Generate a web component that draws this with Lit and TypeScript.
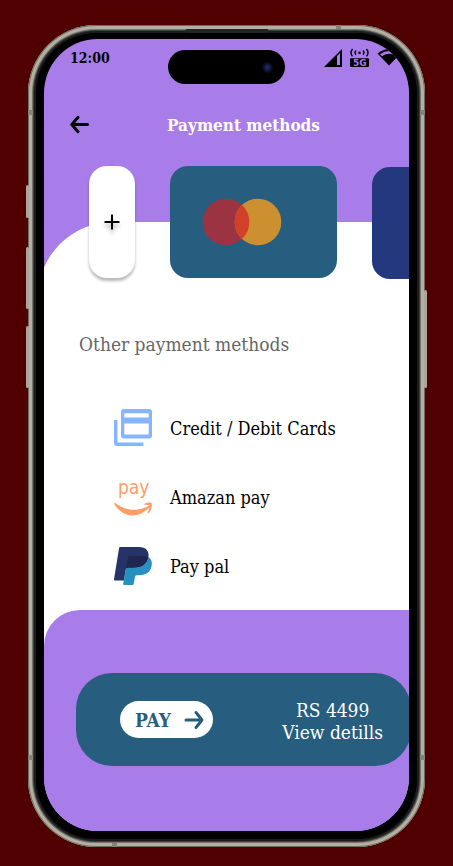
import { LitElement, html, css, svg } from "lit";
import { customElement } from "lit/decorators.js";

const cardsIcon = svg`<svg class="icon" viewBox="0 0 38 38" aria-hidden="true">
  <path fill="#86b5ff" d="M0 11h3.400v22.600h26V37H3a3 3 0 0 1-3-3z"/>
  <path fill="#86b5ff" fill-rule="evenodd" d="M10 0h25a3 3 0 0 1 3 3v23.500a3 3 0 0 1-3 3H10a3 3 0 0 1-3-3V3a3 3 0 0 1 3-3zM10.300 4.200v4.200h24.400V4.200zM10.300 14.500v11h24.400v-11z"/>
</svg>`;

const amazonIcon = svg`<svg class="icon" viewBox="0 0 38 38" aria-hidden="true">
  <text class="logo-text" x="4" y="16">pay</text>
  <path fill="#ff9d66" d="M0.300 25.600c.3-.8 1-.6 1.600-.1 10 7.800 22.300 8 33.200 2.300.9-.4 1.500.4.700 1.100C31 34 25 37.500 18.500 37.500 11.500 37.500 4.500 33 .3 26.600z"/>
  <path fill="#ff9d66" d="M30.500 25.900c1.600-1.400 5.400-1.900 7.100-.9.900 2.500-.3 7.700-2.900 10-.7.600-1.300.2-1-.5.8-2 2-5.300 1.500-6.600-.5-1.200-2.700-1.200-4.300-1.100-.8.100-1-.4-.4-.9z"/>
</svg>`;

const paypalIcon = svg`<svg class="icon" viewBox="0 0 38 38" aria-hidden="true">
  <path fill="#253368" d="M6.600 0h18.600C31.800 0 35.400 4 34.400 9.800 33 17 28 20.800 20 20.800h-5.500c-1.800 0-2.600.8-2.900 2.500L10 33.400H1c-.8 0-1.100-.4-1-1.200L5 1.400C5.200.5 5.700 0 6.600 0z"/>
  <path fill="#2790c3" d="M34.500 10c2.700 1.900 3.800 4.900 3.200 8.600C36.600 25 32.500 28.300 25 28.300h-2c-1.300 0-1.900.6-2.100 1.900l-1.200 6.500c-.2.900-.6 1.300-1.500 1.300h-8c-.8 0-1.100-.5-1-1.200l2.400-13.500c.3-1.700 1.100-2.500 2.900-2.500H20c8 0 13-3.800 14.500-10.800z"/>
  <path fill="#1f264f" d="M16 9h14.500c1.700 0 3 .4 4 1C33 17 28 20.800 20 20.800h-5.500c-1.300 0-2.100.4-2.600 1.400L14 10.600c.2-1 .9-1.600 2-1.600z"/>
</svg>`;

@customElement("app-root")
export class AppRoot extends LitElement {
  static styles = css`
    :host {
      display: block;
      box-sizing: border-box;
      min-height: 100vh;
      padding: 25px 28px 19px;
      background: #500000;
      font-family: "DejaVu Serif Condensed", "DejaVu Serif", serif;
      font-size: 18px;
      line-height: 22px;
      color: #000;
    }
    * { box-sizing: border-box; }
    .phone {
      position: relative;
      display: flex;
      min-height: calc(100vh - 44px);
      padding: 14px 16px 16px;
      border-radius: 68px;
      background: #000;
      box-shadow:
        inset 0 0 0 1px #6f6b60,
        inset 0 0 0 4px #b3afa2,
        inset 0 0 0 5px #77756e,
        inset 0 0 0 6px #3a3b3b,
        inset 0 0 0 8px #1b1c1d;
    }
    .key {
      position: absolute;
      width: 3px;
      border-radius: 2px;
      background: #aaa699;
    }
    .key.left { left: -2px; }
    .key.right { right: -2px; top: 265px; height: 98px; }
    .mute { top: 160px; height: 33px; }
    .up { top: 222px; height: 62px; }
    .down { top: 301px; height: 62px; }
    .band {
      position: absolute;
      width: 5px;
      height: 5px;
      background: #85827a;
    }
    .band.l { left: 0; }
    .band.r { right: 0; }
    .band.hi { top: 85px; }
    .band.lo { bottom: 87px; }
    .band.t { top: 0; right: 84px; height: 4px; }
    .band.b { bottom: 0; left: 84px; height: 4px; }
    .speaker {
      position: absolute;
      top: 4px;
      left: 50%;
      width: 82px;
      height: 4px;
      margin-left: -41px;
      border-radius: 0 0 4px 4px;
      background: #242424;
    }
    .screen {
      position: relative;
      flex: 1;
      min-width: 0;
      display: flex;
      flex-direction: column;
      overflow: hidden;
      border-radius: 54px;
      background: #a87dea;
    }
    .island {
      position: absolute;
      top: 11px;
      left: 50%;
      width: 117px;
      height: 34px;
      margin-left: -59px;
      border-radius: 17px;
      background: #000;
      display: flex;
      align-items: center;
      justify-content: flex-end;
      padding-right: 12px;
    }
    .lens {
      width: 11px;
      height: 11px;
      border-radius: 50%;
      background: radial-gradient(#1f2c66 10%, #10163c 40%, #080610 70%);
    }
    .status {
      display: flex;
      align-items: center;
      justify-content: space-between;
      padding: 8px 8px 0 26px;
      font-size: 14px;
      font-weight: bold;
    }
    .signals { display: block; width: 77px; height: 20px; }
    .tiny { font: bold 9px "DejaVu Sans", sans-serif; fill: #a87dea; }
    .title {
      display: grid;
      grid-template-columns: 24px 1fr 24px;
      align-items: center;
      padding: 45px 23px 0;
    }
    h1, h2 { margin: 0; line-height: 22px; }
    h1 { font-size: 17px; color: #fff; text-align: center; padding-left: 34px; white-space: nowrap; }
    h2 { font-size: 19px; font-weight: normal; color: #666; }
    button { font: inherit; color: inherit; border: 0; padding: 0; cursor: pointer; }
    .back { display: flex; background: none; }
    .back svg { width: 24px; height: 22px; }
    .wallet {
      position: relative;
      z-index: 1;
      display: flex;
      gap: 35px;
      height: 113px;
      padding-left: 45px;
      margin-top: 30px;
    }
    .add, .card { flex: none; height: 112px; border-radius: 18px; }
    .add {
      width: 46px;
      display: flex;
      align-items: center;
      justify-content: center;
      background: #fff;
      box-shadow: 0 3px 3px rgba(0, 0, 0, 0.28);
    }
    .add svg { width: 16px; height: 20px; filter: drop-shadow(0 4px 2px rgba(0, 0, 0, 0.3)); }
    .card {
      width: 167px;
      display: flex;
      align-items: center;
      padding-left: 32px;
      background: #275d7e;
    }
    .card svg { width: 80px; height: 48px; }
    .navy { align-self: flex-end; background: #24387e; }
    .sheet {
      flex: 1;
      margin: -57px 0 0 -6px;
      padding: 111px 0 24px 41px;
      border-radius: 75px 0 0 0;
      background: #fff;
    }
    ul { list-style: none; margin: 0; padding: 54px 0 0 35px; display: grid; gap: 31px; }
    li { display: flex; }
    .method {
      display: flex;
      align-items: center;
      gap: 18px;
      background: none;
      white-space: nowrap;
    }
    .method span { padding-top: 2px; }
    .icon { display: block; width: 38px; height: 38px; overflow: visible; }
    .logo-text { font: 19px "DejaVu Sans Condensed", "Open Sans", sans-serif; fill: #ff9d66; }
    .checkout { background: linear-gradient(#fff 50%, #a87dea 50%); }
    .footer {
      padding: 63px 0 65px 32px;
      border-radius: 36px 0 0 0;
      background: #a87dea;
    }
    .bar {
      display: flex;
      align-items: center;
      justify-content: space-between;
      height: 93px;
      margin-right: -2px;
      padding: 0 28px 0 44px;
      border-radius: 36px;
      background: #275d7e;
      color: #fff;
    }
    .pay {
      display: flex;
      align-items: center;
      justify-content: space-between;
      width: 93px;
      height: 37px;
      padding: 0 9px 0 15px;
      border-radius: 19px;
      background: #fff;
      color: #275d7e;
      font-size: 19px;
      font-weight: bold;
    }
    .pay svg { width: 20px; height: 20px; }
    .total { padding-top: 2px; font-size: 19px; text-align: center; }
    .total p { margin: 0; }
    .total a { color: inherit; text-decoration: none; }
  `;

  private methods = [
    { label: "Credit / Debit Cards", icon: cardsIcon },
    { label: "Amazan pay", icon: amazonIcon },
    { label: "Pay pal", icon: paypalIcon },
  ];

  render() {
    return html`
      <div class="phone">
        <span class="key left mute"></span>
        <span class="key left up"></span>
        <span class="key left down"></span>
        <span class="key right"></span>
        <span class="band l hi"></span>
        <span class="band r hi"></span>
        <span class="band l lo"></span>
        <span class="band r lo"></span>
        <span class="band t"></span>
        <span class="band b"></span>
        <span class="speaker"></span>
        <main class="screen">
          <div class="status">
            <time>12:00</time>
            <svg class="signals" viewBox="0 0 77 20" aria-hidden="true">
              <path fill-rule="evenodd" d="M0 19L18 1v18zM13 8v9h3V5z"/>
              <g fill="none" stroke="#000" stroke-width="1.400">
                <path d="M28.500 1q-3 3.700 0 7.400M32 2.600q-2 2.100 0 4.200M42.500 1q3 3.700 0 7.400M39 2.600q2 2.100 0 4.200"/>
              </g>
              <circle cx="35.500" cy="4.700" r="1.300"/>
              <rect x="26" y="10.200" width="19" height="8.800" rx="1"/>
              <text class="tiny" x="29" y="18">5G</text>
              <path fill-rule="evenodd" d="M53.500 5.500Q65-3.500 76.500 5.500L65 17.500zM56 6.300l2 1.900q7-4.700 14 0l2-1.900q-9-6.500-18 0z"/>
            </svg>
          </div>
          <div class="island"><span class="lens"></span></div>
          <header class="title">
            <button class="back" aria-label="Back">
              <svg viewBox="0 0 24 22" fill="none" stroke="#000" stroke-width="3" stroke-linecap="round" stroke-linejoin="round">
                <path d="M20.500 10.500H5M11 3.300L4.800 10.500l6.200 7.200"/>
              </svg>
            </button>
            <h1>Payment methods</h1>
          </header>
          <div class="wallet">
            <button class="add" aria-label="Add card">
              <svg viewBox="0 0 16 20" stroke="#000" stroke-width="2"><path d="M0.500 10h15M8 2.500v15"/></svg>
            </button>
            <div class="card">
              <svg viewBox="0 0 80 48" aria-hidden="true">
                <circle cx="24" cy="24" r="23.300" fill="#9c3343"/>
                <circle cx="56" cy="24" r="23.300" fill="#cd9030"/>
                <path fill="#d1412a" d="M40 7a23.300 23.300 0 0 1 0 34a23.300 23.300 0 0 1 0-34z"/>
              </svg>
            </div>
            <div class="card navy"></div>
          </div>
          <section class="sheet">
            <h2>Other payment methods</h2>
            <ul>
              ${this.methods.map(
                (m) => html`<li><button class="method">${m.icon}<span>${m.label}</span></button></li>`
              )}
            </ul>
          </section>
          <div class="checkout">
            <footer class="footer">
              <div class="bar">
                <button class="pay">
                  <span>PAY</span>
                  <svg viewBox="0 0 20 20" fill="none" stroke="#275d7e" stroke-width="3" stroke-linecap="round" stroke-linejoin="round" aria-hidden="true">
                    <path d="M2 10h15.500M12 2.500l6 7.500-6 7.500"/>
                  </svg>
                </button>
                <div class="total">
                  <p>RS 4499</p>
                  <p><a href="#details">View detills</a></p>
                </div>
              </div>
            </footer>
          </div>
        </main>
      </div>
    `;
  }
}
